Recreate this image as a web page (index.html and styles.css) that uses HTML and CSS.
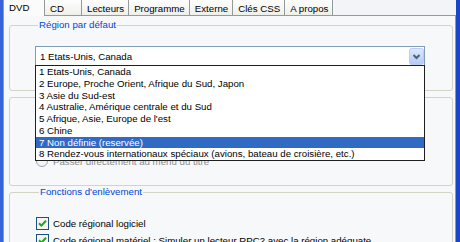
FILE: index.html
```html
<!DOCTYPE html>
<html lang="fr">
<head>
    <meta charset="UTF-8">
    <title>Options - DVD</title>
    <link rel="stylesheet" href="styles.css">
</head>
<body>
    <div class="frame">
        <div class="tabs">
            <div class="tab active">DVD</div>
            <div class="tab">CD</div>
            <div class="tab">Lecteurs</div>
            <div class="tab">Programme</div>
            <div class="tab">Externe</div>
            <div class="tab">Clés CSS</div>
            <div class="tab">A propos</div>
        </div>

        <div class="page">
            <fieldset class="group group-region">
                <legend>Région par défaut</legend>
                <div class="combo">
                    <span class="combo-text">1 Etats-Unis, Canada</span>
                    <span class="combo-btn">
                        <svg width="15" height="17" viewBox="0 0 15 17">
                            <defs>
                                <linearGradient id="btnbg" x1="0" y1="0" x2="0" y2="1">
                                    <stop offset="0" stop-color="#dfe8fd"/>
                                    <stop offset="1" stop-color="#b5c9f4"/>
                                </linearGradient>
                            </defs>
                            <rect x="0.5" y="0.5" width="14" height="16" rx="2" fill="url(#btnbg)" stroke="#bccdf3"/>
                            <path d="M4.5 7 L7.5 10 L10.5 7" fill="none" stroke="#4d6185" stroke-width="2"/>
                        </svg>
                    </span>
                    <!-- open dropdown -->
                    <ul class="droplist">
                        <li>1 Etats-Unis, Canada</li>
                        <li>2 Europe, Proche Orient, Afrique du Sud, Japon</li>
                        <li>3 Asie du Sud-est</li>
                        <li>4 Australie, Amérique centrale et du Sud</li>
                        <li>5 Afrique, Asie, Europe de l'est</li>
                        <li>6 Chine</li>
                        <li class="selected">7 Non définie (reservée)</li>
                        <li>8 Rendez-vous internationaux spéciaux (avions, bateau de croisière, etc.)</li>
                    </ul>
                </div>
            </fieldset>

            <fieldset class="group group-nav">
                <legend>Navigation</legend>
                <div class="option-row muted">
                    <span class="radio"></span>
                    <span>Passer directement au menu du titre</span>
                </div>
            </fieldset>

            <fieldset class="group group-remove">
                <legend>Fonctions d'enlèvement</legend>
                <label class="check-row">
                    <svg class="checkbox" width="13" height="13" viewBox="0 0 13 13">
                        <rect x="0.5" y="0.5" width="12" height="12" fill="#f4f4f0" stroke="#1c5180"/>
                        <path d="M3 6.2 L5.4 8.6 L10 3.8" fill="none" stroke="#21a121" stroke-width="2"/>
                    </svg>
                    <span>Code régional logiciel</span>
                </label>
                <label class="check-row">
                    <svg class="checkbox" width="13" height="13" viewBox="0 0 13 13">
                        <rect x="0.5" y="0.5" width="12" height="12" fill="#f4f4f0" stroke="#1c5180"/>
                        <path d="M3 6.2 L5.4 8.6 L10 3.8" fill="none" stroke="#21a121" stroke-width="2"/>
                    </svg>
                    <span>Code régional matériel : Simuler un lecteur RPC2 avec la région adéquate</span>
                </label>
            </fieldset>
        </div>
    </div>
</body>
</html>
```

FILE: styles.css
```css
* {
    margin: 0;
    padding: 0;
    box-sizing: border-box;
}

html, body {
    width: 460px;
    height: 242px;
    overflow: hidden;
}

body {
    font-family: "Liberation Sans", Arial, sans-serif;
    font-size: 9.7px;
    color: #000;
    background: #f3f4f7;
}

.frame {
    height: 242px;
    display: flex;
    flex-direction: column;
    border-left: 3px solid #3565d8;
    border-right: 4px solid #1b44c8;
    background: #f3f4f7;
}

/* tab strip */
.tabs {
    display: flex;
    align-items: flex-end;
    height: 15px;
    position: relative;
    z-index: 1;
}

.tab {
    height: 15px;
    min-width: 37px;
    padding: 3px 4px 0 5px;
    line-height: 12px;
    border-right: 1px solid #919b9c;
    background: linear-gradient(#fefefe, #efefea);
    white-space: nowrap;
}

.tab.active {
    height: 16px;
    min-width: 42px;
    margin-bottom: -1px;
    padding-top: 2px;
    border-left: 1px solid #919b9c;
    background: #fbfbfc;
}

/* tab page */
.page {
    flex: 1;
    border: 1px solid #919b9c;
    border-bottom: none;
    background: #f7f8fa;
    padding: 3px 2px 0 5px;
}

.group {
    border: 1px solid #d3d3c7;
    border-radius: 3px;
}

.group legend {
    margin-left: 3px;
    padding: 0 1px;
    line-height: 12px;
    color: #0046d5;
}

.group-region {
    padding: 15px 27px 24px 25px;
}

.group-nav {
    padding: 50px 27px 16px 26px;
}

.group-remove {
    padding: 19px 27px 20px 26px;
}

/* combo box */
.combo {
    position: relative;
    height: 20px;
    display: flex;
    align-items: center;
    border: 1px solid #7f9db9;
    background: #fff;
    padding-left: 4px;
}

.combo-text {
    flex: 1;
}

.combo-btn {
    display: flex;
}

.droplist {
    position: absolute;
    top: 100%;
    left: -1px;
    right: -1px;
    list-style: none;
    border: 1px solid #1f1f1f;
    background: #fff;
    z-index: 2;
}

.droplist li {
    height: 11.75px;
    line-height: 11.75px;
    padding-left: 3px;
    white-space: nowrap;
}

.droplist li.selected {
    background: #316ac5;
    color: #fff;
}

/* option rows */
.option-row {
    display: flex;
    align-items: center;
    gap: 5px;
    height: 16px;
}

.option-row.muted {
    color: #8c8c8c;
}

.radio {
    width: 12px;
    height: 12px;
    border: 1px solid #9aa5b5;
    border-radius: 50%;
    background: #f4f4f0;
}

.check-row {
    display: flex;
    align-items: center;
    gap: 4px;
    height: 13px;
    margin-bottom: 4px;
    white-space: nowrap;
}

.checkbox {
    flex: none;
}
```
